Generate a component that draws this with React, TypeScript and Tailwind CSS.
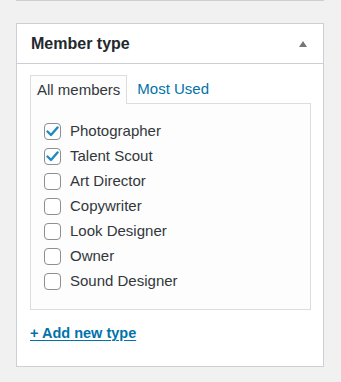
import React from "react";

const items = [
	{ label: "Photographer", checked: true },
	{ label: "Talent Scout", checked: true },
	{ label: "Art Director", checked: false },
	{ label: "Copywriter", checked: false },
	{ label: "Look Designer", checked: false },
	{ label: "Owner", checked: false },
	{ label: "Sound Designer", checked: false },
];

function Checkbox({ checked }: { checked: boolean }) {
	return (
		<span className="flex h-[17px] w-[17px] shrink-0 items-center justify-center rounded-[4px] border border-[#8c8f94] bg-white">
			{checked && (
				<svg width="13" height="11" viewBox="0 0 13 11" fill="none">
					<path
						d="M1.5 5.5 L5 9 L11.5 1.5"
						stroke="#1e8cbe"
						strokeWidth="2.4"
						strokeLinecap="round"
						strokeLinejoin="round"
					/>
				</svg>
			)}
		</span>
	);
}

export default function App() {
	return (
		<div
			className="h-[382px] w-[341px] bg-[#f1f1f1] px-[16px]"
			style={{ fontFamily: '"Liberation Sans", Arial, sans-serif' }}
		>
			{/* previous box edge */}
			<div className="h-px w-[308px] bg-[#ccd0d4]" />

			{/* MEMBER TYPE BOX */}
			<div className="mt-[22px] w-[308px] border border-[#ccd0d4] bg-white">
				<div className="flex h-[40px] items-center justify-between border-b border-[#ccd0d4] pl-[14px] pr-[16px]">
					<h2 className="text-[16px] font-bold text-[#23282d]">Member type</h2>
					<svg width="8" height="6" viewBox="0 0 8 6">
						<path d="M4 0 L8 6 L0 6 Z" fill="#72777c" />
					</svg>
				</div>

				<div className="pl-[13px] pr-[12px] pt-[11px] pb-[23px]">
					{/* TABS */}
					<div className="flex items-end">
						<div className="relative z-10 -mb-px flex h-[29px] items-center border border-b-0 border-[#dddddd] bg-[#fdfdfd] px-[6px] text-[15px] text-[#32373c]">
							All members
						</div>
						<div className="flex h-[28px] items-center pl-[10px] text-[15px] text-[#0073aa]">
							Most Used
						</div>
					</div>

					{/* LIST */}
					<div className="border border-[#dddddd] bg-[#fdfdfd] px-[13px] py-[15px]">
						{items.map((item) => (
							<div key={item.label} className="flex h-[25px] items-center gap-[9px]">
								<Checkbox checked={item.checked} />
								<span className="text-[15px] text-[#32373c]">{item.label}</span>
							</div>
						))}
					</div>

					<div className="mt-[13px] leading-[20px]">
						<a href="#" className="text-[14.5px] font-bold text-[#0073aa] underline underline-offset-2">
							+ Add new type
						</a>
					</div>
				</div>
			</div>
		</div>
	);
}
